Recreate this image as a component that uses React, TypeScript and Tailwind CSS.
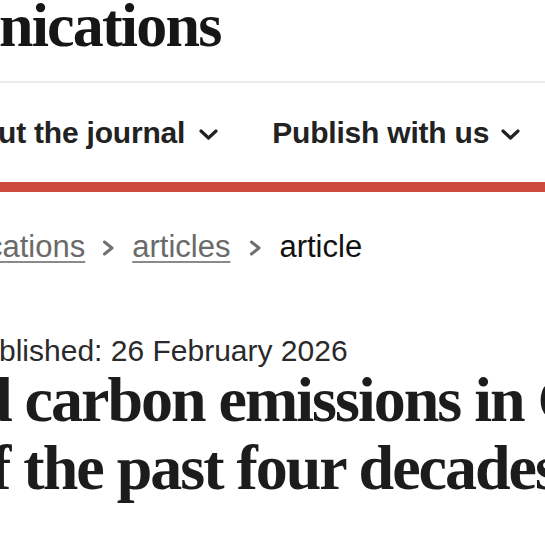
import React from "react";

function ChevronDown() {
  return (
    <svg width="19" height="11" viewBox="0 0 19 11" className="shrink-0">
      <path d="M2 2 L9.5 9 L17 2" fill="none" stroke="#222" strokeWidth="3.2" strokeLinecap="round" strokeLinejoin="round" />
    </svg>
  );
}

function ChevronRight() {
  return (
    <svg width="13" height="16" viewBox="0 0 13 16" className="shrink-0">
      <path d="M2.5 2 L10 8 L2.5 14" fill="none" stroke="#707070" strokeWidth="3" strokeLinecap="round" strokeLinejoin="round" />
    </svg>
  );
}

export default function App() {
  return (
    <div className="w-[545px] h-[545px] overflow-hidden bg-white">
      {/* journal title */}
      <div className="h-[81px] whitespace-nowrap">
        <div className="-ml-[1px] text-[62px] leading-[50px] font-bold tracking-[-1.8px] text-[#161616] [font-family:'Liberation_Serif',serif]">
          nications
        </div>
      </div>
      <div className="h-[2px] bg-[#ebebeb]" />

      {/* nav */}
      <nav className="pt-[30px] pb-[29px] whitespace-nowrap [font-family:'Liberation_Sans',Arial,sans-serif]">
        <div className="flex items-center h-[40px] -ml-[2px] text-[30px] leading-[40px] font-bold tracking-[-0.2px] text-[#222]">
          <span>ut the journal</span>
          <span className="ml-[14px] mt-[2px]"><ChevronDown /></span>
          <span className="ml-[54px]">Publish with us</span>
          <span className="ml-[12px] mt-[2px]"><ChevronDown /></span>
        </div>
      </nav>
      <div className="h-[10px] bg-[#cc4a3b]" />

      {/* breadcrumbs */}
      <div className="pt-[37px] whitespace-nowrap [font-family:'Liberation_Sans',Arial,sans-serif]">
        <div className="flex items-center -ml-[13px] text-[31px] leading-[36px]">
          <a className="text-[#6a6a6a] underline decoration-2 underline-offset-[4px] decoration-[#8a8a8a]">cations</a>
          <span className="ml-[17px] mt-[1px]"><ChevronRight /></span>
          <a className="ml-[17px] text-[#6a6a6a] underline decoration-2 underline-offset-[4px] decoration-[#8a8a8a]">articles</a>
          <span className="ml-[19px] mt-[1px]"><ChevronRight /></span>
          <span className="ml-[17px] text-[#111]">article</span>
        </div>
      </div>

      {/* article header */}
      <div className="pt-[72px] whitespace-nowrap">
        <p className="-ml-[1px] text-[30px] leading-[28px] text-[#2a2a2a] [font-family:'Liberation_Sans',Arial,sans-serif]">
          blished: 26 February 2026
        </p>
        <h1 className="mt-[1px] text-[64px] leading-[68px] font-bold tracking-[-2px] text-[#1c1c1c] [font-family:'Liberation_Serif',serif]">
          <div className="-ml-[23px]">d carbon emissions in China</div>
          <div className="-ml-[10px]">f the past four decades</div>
        </h1>
      </div>
    </div>
  );
}
